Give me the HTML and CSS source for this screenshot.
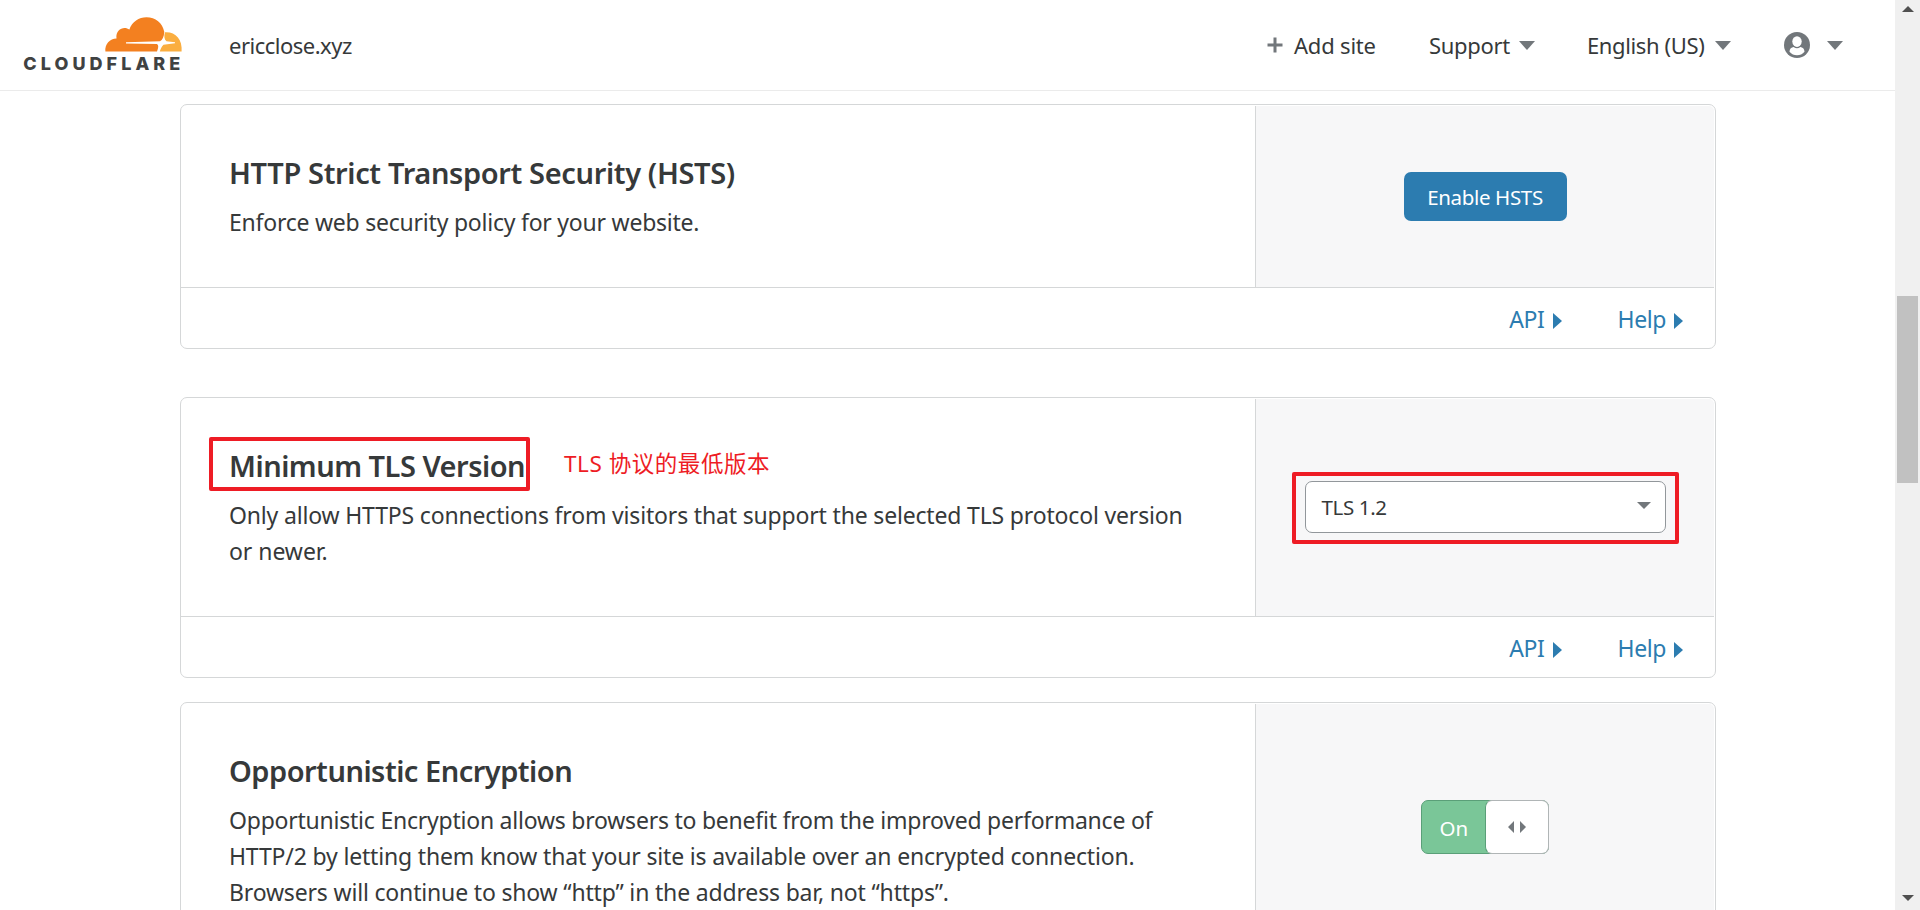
FILE: index.html
```
<!DOCTYPE html>
<html lang="en">
<head>
<meta charset="utf-8">
<title>Cloudflare - ericclose.xyz</title>
<link rel="stylesheet" href="styles.css">
</head>
<body>
<div class="page">
  <header class="header">
    <svg class="logo" width="160" height="58" viewBox="0 0 160 58">
      <path fill="#f38020" d="M83.400 37.600C82.500 30 88 24.400 94.500 24.400C93.300 15.500 102 11.600 107.400 15.600C110 7.500 117 3.200 124.500 3.200C133.500 3.200 140.500 8.800 142.300 18C141.800 23 140.500 26.200 138 27.300L104 28.200V29.600L134.800 30C136.500 30.900 136.500 32.500 135.800 35L135 37.600Z"/>
      <path fill="#faae40" d="M143 18.200C153 17.400 160.800 25 159.600 37.600H137.800C138.500 35.600 139.500 32.400 141.500 30.800L153 29.300V28.300L144.500 27.200C142.300 25.500 141.800 22 143 18.200Z"/>
      <text class="logo-word" x="1.300" y="56" textLength="157" lengthAdjust="spacing">CLOUDFLARE</text>
    </svg>
    <span class="site">ericclose.xyz</span>
    <nav class="nav">
      <a class="nav-item add"><svg width="16" height="16" viewBox="0 0 16 16"><path d="M8 0.500V15.500M0.500 8H15.500" stroke="#72777b" stroke-width="3"/></svg><span class="nav-add">Add site</span></a>
      <a class="nav-item support"><span class="nav-support">Support</span><i class="caret"></i></a>
      <a class="nav-item lang"><span class="nav-lang">English (US)</span><i class="caret"></i></a>
      <a class="nav-item user"><svg width="26" height="26" viewBox="0 0 26 26"><circle cx="13" cy="13" r="13" fill="#72777b"/><ellipse cx="13" cy="9.600" rx="4.700" ry="5.300" fill="#fff"/><path d="M5.500 19.800C5.500 16.800 7.500 15.400 9.600 15.100Q13 17.600 16.400 15.100C18.500 15.400 20.500 16.800 20.500 19.800Q17.500 23.300 13 23.300Q8.500 23.300 5.500 19.800Z" fill="#fff"/></svg><i class="caret"></i></a>
    </nav>
  </header>
  <main class="cards">
    <section class="card">
      <div class="card-body hsts">
        <div class="info">
          <h2>HTTP Strict Transport Security (HSTS)</h2>
          <p class="tight">Enforce web security policy for your website.</p>
        </div>
        <div class="control"><button class="button">Enable HSTS</button></div>
      </div>
      <footer class="links"><a>API<i class="tri"></i></a><a class="help">Help<i class="tri"></i></a></footer>
    </section>
    <section class="card after-gap">
      <div class="card-body tls">
        <div class="info">
          <h2 class="tight-title">Minimum TLS Version</h2>
          <p>Only allow HTTPS connections from visitors that support the selected TLS protocol version<br><span class="loose">or newer.</span></p>
          <span class="mark mark-title"></span>
          <span class="note">TLS 协议的最低版本</span>
        </div>
        <div class="control">
          <div class="select"><span>TLS 1.2</span><i class="select-caret"></i></div>
          <span class="mark mark-select"></span>
        </div>
      </div>
      <footer class="links"><a>API<i class="tri"></i></a><a class="help">Help<i class="tri"></i></a></footer>
    </section>
    <section class="card last">
      <div class="card-body opp">
        <div class="info">
          <h2 class="tight-title">Opportunistic Encryption</h2>
          <p><span class="tight">Opportunistic Encryption allows browsers to benefit from the improved performance of</span><br>HTTP/2 by letting them know that your site is available over an encrypted connection.<br>Browsers will continue to show “http” in the address bar, not “https”.</p>
        </div>
        <div class="control">
          <div class="toggle"><span class="toggle-on">On</span><span class="knob"><svg width="18" height="12" viewBox="0 0 18 12"><path d="M6 0V12L0 6ZM12 0L18 6L12 12Z" fill="#72777b"/></svg></span></div>
        </div>
      </div>
    </section>
  </main>
</div>
<aside class="scrollbar">
  <i class="arrow-up"></i>
  <div class="thumb"></div>
  <i class="arrow-down"></i>
</aside>
</body>
</html>
```
FILE: styles.css
```
* { box-sizing: border-box; }
body {
  margin: 0;
  height: 910px;
  overflow: hidden;
  display: flex;
  background: #fff;
  color: #36393a;
  font-family: "Noto Sans", "Noto Sans CJK SC", sans-serif;
}
.page { width: 1895px; height: 910px; overflow: hidden; }

/* Header */
.header {
  height: 91px;
  display: flex;
  align-items: center;
  border-bottom: 1px solid #ebebeb;
  padding: 0 52px 0 22px;
  font-size: 22px;
  white-space: nowrap;
}
.logo { margin-bottom: 4px; overflow: visible; }
.logo-word { font: 800 18px Inter, sans-serif; fill: #404242; }
.site { margin-left: 47px; letter-spacing: -0.5px; }
.nav { display: flex; margin-left: auto; }
.nav-item { display: flex; align-items: center; }
.nav-add { margin-left: 11px; width: 82px; letter-spacing: -0.2px; }
.support { margin-left: 53px; }
.nav-support { width: 90px; letter-spacing: -0.300px; }
.lang { margin-left: 52px; }
.nav-lang { width: 128px; letter-spacing: -0.38px; }
.user { margin-left: 53px; gap: 17px; }
.caret {
  border: 8px solid transparent;
  border-top: 9px solid #72777b;
  border-bottom: 0;
}

/* Cards */
.cards { margin: 13px 0 0 180px; width: 1536px; }
.card {
  border: 1px solid #d5d7d8;
  border-radius: 7px;
  padding: 1px 1px 0 0;
  margin-bottom: 24px;
}
.after-gap { margin-top: 48px; }
.card-body { display: flex; border-bottom: 1px solid #d5d7d8; }
.hsts { height: 182px; }
.tls { height: 218px; }
.opp { height: 254px; }
.info { position: relative; width: 1074px; padding: 47px 0 0 48px; white-space: nowrap; }
h2 {
  margin: 0 0 11px;
  font-size: 29px;
  line-height: 40px;
  font-weight: 600;
  letter-spacing: -0.36px;
}
.tight-title { letter-spacing: -0.5px; }
p { margin: 0; font-size: 23px; line-height: 36px; letter-spacing: -0.17px; }
.tight { letter-spacing: -0.23px; }
.loose { letter-spacing: -0.05px; }
.control {
  position: relative;
  flex: 1;
  display: flex;
  align-items: center;
  justify-content: center;
  border-left: 1px solid #d5d7d8;
  border-top-right-radius: 5px;
  background: #f7f7f8;
}
.links {
  height: 60px;
  display: flex;
  align-items: center;
  justify-content: flex-end;
  padding: 2px 31px 0 0;
  color: #2c7cb0;
  font-size: 23px;
  letter-spacing: -0.4px;
}
.links a { display: flex; align-items: center; }
.help { margin-left: 56px; }
.tri {
  margin: 4px 0 0 8px;
  border: 8px solid transparent;
  border-left: 9px solid #2c7cb0;
  border-right: 0;
}

/* Controls */
.button {
  width: 163px;
  height: 49px;
  border: 0;
  border-radius: 7px;
  padding: 0;
  background: #2c7cb0;
  color: #fff;
  font: 20.500px "Noto Sans", sans-serif;
  letter-spacing: -0.35px;
}
.select {
  width: 361px;
  height: 52px;
  display: flex;
  align-items: center;
  justify-content: space-between;
  margin-bottom: 2px;
  border: 1px solid #92979b;
  border-radius: 7px;
  padding: 0 14px 0 16px;
  background: #fff;
  font-size: 20.500px;
  letter-spacing: -0.35px;
}
.select-caret {
  margin-bottom: 3px;
  border: 7.500px solid transparent;
  border-top: 7px solid #72777b;
  border-bottom: 0;
}
.toggle {
  width: 128px;
  height: 54px;
  display: flex;
  margin-top: -7px;
  border: 1px solid #5a9f78;
  border-radius: 7px;
  background: #7ac698;
  color: #fff;
  font-size: 20.500px;
}
.toggle-on { width: 64px; padding-top: 1px; line-height: 52px; text-align: center; }
.knob {
  width: 64px;
  height: 54px;
  margin: -1px -1px 0 0;
  display: flex;
  align-items: center;
  justify-content: center;
  border: 1px solid #b0b5b6;
  border-left-color: #5a9f78;
  border-radius: 7px;
  background: #fff;
}

/* Annotations drawn over the page */
.mark { position: absolute; border: 4px solid #ee1c25; border-radius: 2px; }
.mark-title { left: 28px; top: 38px; width: 321px; height: 54px; }
.mark-select { left: 36px; top: 73px; width: 387px; height: 72px; }
.note {
  position: absolute;
  left: 383px;
  top: 47px;
  color: #ee1c25;
  font-size: 22.500px;
  line-height: 36px;
  letter-spacing: 0.550px;
}

/* Scrollbar */
.scrollbar {
  width: 25px;
  height: 910px;
  display: flex;
  flex-direction: column;
  align-items: center;
  background: #f0f0f0;
}
.thumb { width: 21px; height: 187px; margin-top: 284px; background: #c1c1c1; }
.arrow-up {
  margin-top: 6px;
  border: 6px solid transparent;
  border-bottom-color: #505050;
  border-top: 0;
}
.arrow-down {
  margin: auto 0 9px;
  border: 6px solid transparent;
  border-top-color: #505050;
  border-bottom: 0;
}
```
